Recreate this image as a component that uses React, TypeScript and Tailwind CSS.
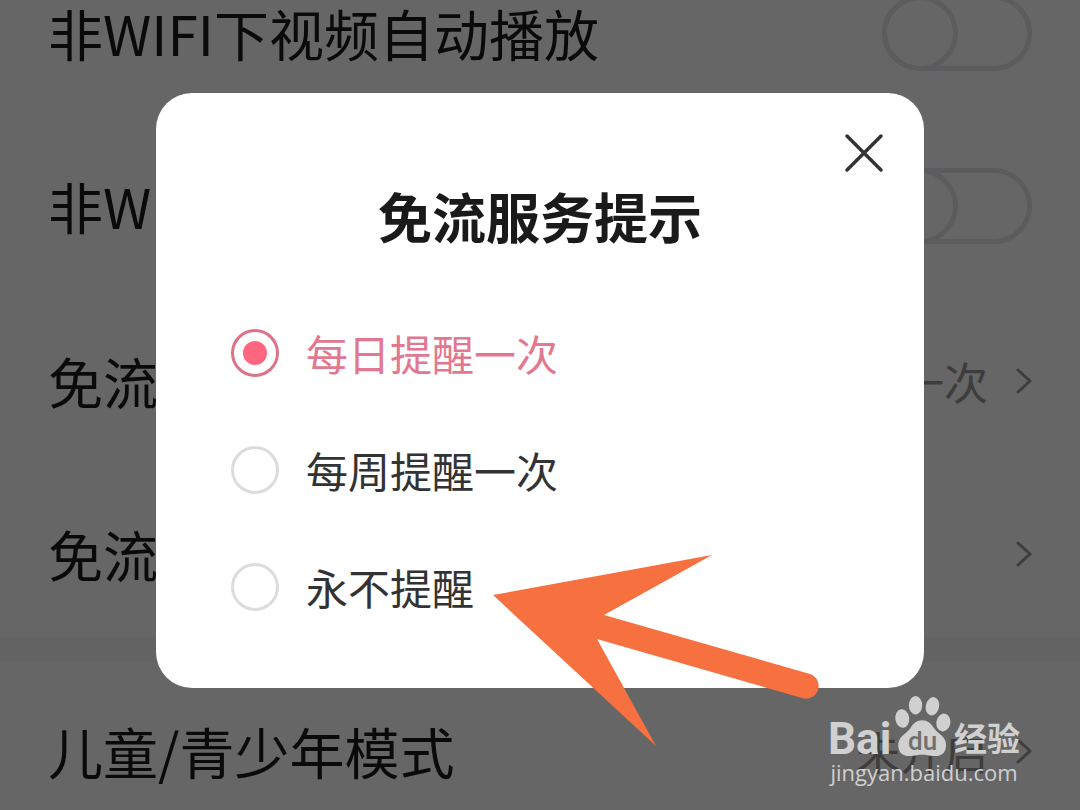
import React, { useState } from 'react';

type Setting = {
  label: string;
  kind: 'switch' | 'link';
  value?: string;
};

const playback: Setting[] = [
  { label: '非WIFI下视频自动播放', kind: 'switch' },
  { label: '非WIFI下动图播放', kind: 'switch' },
  { label: '免流服务提示', kind: 'link', value: '每日提醒一次' },
  { label: '免流服务', kind: 'link' },
];

const mode: Setting[] = [{ label: '儿童/青少年模式', kind: 'link', value: '未开启' }];

const options = ['每日提醒一次', '每周提醒一次', '永不提醒'];

const Chevron = () => (
  <svg viewBox="0 0 16 26" className="h-[26px] w-4 shrink-0" fill="none" stroke="#999" strokeWidth="3" strokeLinecap="round" strokeLinejoin="round" aria-hidden="true">
    <path d="M2 2l12 11L2 24" />
  </svg>
);

const SettingRow = ({ label, kind, value }: Setting) => {
  if (kind === 'switch') {
    return (
      <label className="flex h-[173px] items-center justify-between px-12">
        <span className="text-[55px] leading-none whitespace-nowrap">{label}</span>
        <input
          type="checkbox"
          className="block h-[76px] w-[150px] shrink-0 appearance-none rounded-full border-[5px] border-[#e6e6ea] before:-mt-[5px] before:-ml-[5px] before:block before:size-[76px] before:rounded-full before:border-[5px] before:border-[#e6e6ea] before:content-['']"
        />
      </label>
    );
  }

  return (
    <a href="#" className="flex h-[173px] items-center justify-between px-12 pt-1">
      <span className="text-[55px] leading-none whitespace-nowrap">{label}</span>
      <span className="flex items-center gap-7 text-[44px] leading-none text-[#999]">
        {value}
        <Chevron />
      </span>
    </a>
  );
};

const Paw = () => (
  <div className="relative">
    <svg viewBox="0 0 170 190" className="h-[63px] w-[57px]" fill="#d0d0d0" aria-hidden="true">
      <ellipse cx="24" cy="71" rx="21" ry="28" transform="rotate(-8 24 71)" />
      <ellipse cx="64" cy="31" rx="20" ry="28" />
      <ellipse cx="115" cy="34" rx="20" ry="28" transform="rotate(12 115 34)" />
      <ellipse cx="148" cy="83" rx="21" ry="27" transform="rotate(10 148 83)" />
      <path d="M84 76c16 0 26 9 36 24 9 13 24 19 32 34 7 14 5 33-6 43-9 8-23 8-36 6-9-1-17-3-26-3s-17 2-26 3c-13 2-27 2-36-6-11-10-13-29-6-43 8-15 23-21 32-34 10-15 20-24 36-24z" />
    </svg>
    <span className="absolute inset-x-0 bottom-1 text-center font-['Roboto'] text-[26px] leading-none font-medium text-[#707070]">du</span>
  </div>
);

const Watermark = () => (
  <div className="absolute right-[60px] bottom-6 min-w-48 text-[#d0d0d0]">
    <div className="flex h-[63px] items-end justify-between">
      <span className="font-['Roboto'] text-[44px] leading-[38px] font-bold">Bai</span>
      <Paw />
      <span className="text-[33px] leading-[42px] font-bold">经验</span>
    </div>
    <div className="text-center font-['Open_Sans'] text-[22px] leading-7 font-medium">jingyan.baidu.com</div>
  </div>
);

const Arrow = () => (
  <svg viewBox="0 0 330 194" className="pointer-events-none absolute top-[460px] right-[102px] h-[194px] w-[330px]" fill="#f7703f" aria-hidden="true">
    <path d="M1 42L220 2 112 62 318 121A12.5 12.5 0 0 1 310 145L105 86 164 193z" />
  </svg>
);

const App = () => {
  const [selected, setSelected] = useState(options[0]);

  return (
    <div className="relative h-screen overflow-hidden bg-white font-['Noto_Sans_CJK_SC',sans-serif] text-[#1a1a1a]">
      <main className="-mt-[54px]">
        {playback.map((item) => (
          <SettingRow key={item.label} {...item} />
        ))}
        <div className="h-6 bg-[#f7f7f7]" />
        {mode.map((item) => (
          <SettingRow key={item.label} {...item} />
        ))}
      </main>

      {/* Dialog */}
      <div className="absolute inset-0 flex items-start bg-black/60 px-[156px] pt-[93px]">
        <div role="dialog" aria-labelledby="dialog-title" className="relative w-full rounded-[36px] bg-white px-[75px] pt-24 pb-[77px]">
          <button type="button" aria-label="关闭" className="absolute top-10 right-10">
            <svg viewBox="0 0 40 40" className="size-10" fill="none" stroke="#333" strokeWidth="3.5" strokeLinecap="round">
              <path d="M3 3l34 34M37 3L3 37" />
            </svg>
          </button>
          <h1 id="dialog-title" className="text-center text-[54px] leading-[54px] font-bold">免流服务提示</h1>
          <div className="mt-[86px] flex flex-col gap-[69px]">
            {options.map((option) => (
              <label key={option} className="flex h-12 items-center gap-[27px] text-[42px] leading-none text-[#333] has-checked:text-[#e2788f]">
                <input
                  type="radio"
                  name="reminder"
                  checked={selected === option}
                  onChange={() => setSelected(option)}
                  className="flex size-12 shrink-0 appearance-none items-center justify-center rounded-full border-3 border-[#dcdcdc] checked:border-[#dc7389] checked:before:size-6 checked:before:rounded-full checked:before:bg-[#ff6680] checked:before:content-['']"
                />
                {option}
              </label>
            ))}
          </div>
          <Arrow />
        </div>
      </div>

      <Watermark />
    </div>
  );
};

export default App;
